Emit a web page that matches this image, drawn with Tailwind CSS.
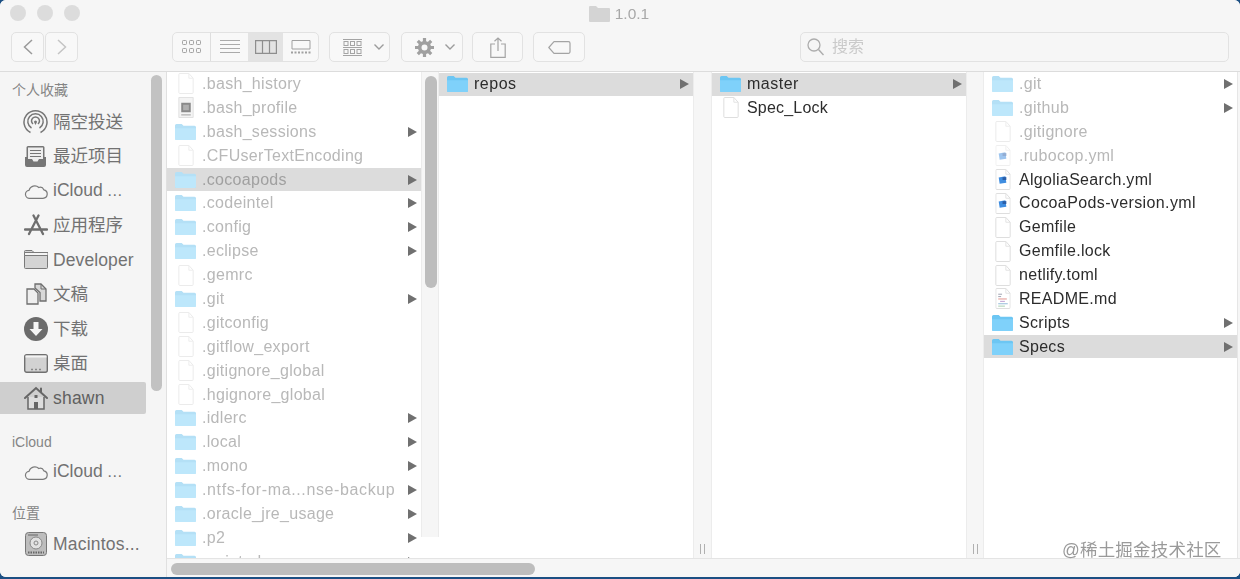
<!DOCTYPE html>
<html><head><meta charset="utf-8"><title>1.0.1</title>
<script src="https://cdn.jsdelivr.net/npm/@tailwindcss/browser@4"></script></head>
<body>
<svg class="hidden" width="0" height="0">
<symbol id="folder" viewBox="0 0 21 16"><path fill="#6cc6f3" d="M1.5 0h5.2l1.8 1.8h11a1.5 1.5 0 0 1 1.5 1.5v11.2a1.5 1.5 0 0 1-1.5 1.5h-18A1.5 1.5 0 0 1 0 14.500V1.500A1.500 1.500 0 0 1 1.500 0z"/><path fill="#7fd1fa" d="M0 4.200h21v10.300a1.500 1.500 0 0 1-1.500 1.500h-18A1.500 1.500 0 0 1 0 14.500z"/></symbol>
<symbol id="folderlight" viewBox="0 0 21 16"><path fill="#b4e0f6" d="M1.5 0h5.2l1.800 1.800h11a1.500 1.500 0 0 1 1.500 1.500v11.200a1.500 1.500 0 0 1-1.500 1.500h-18A1.500 1.500 0 0 1 0 14.500V1.500A1.500 1.500 0 0 1 1.500 0z"/><path fill="#bde7fb" d="M0 4.200h21v10.300a1.500 1.500 0 0 1-1.500 1.500h-18A1.500 1.500 0 0 1 0 14.500z"/></symbol>
<symbol id="doc" viewBox="0 0 16 22"><path fill="#fff" stroke="#dcdcdc" d="M1.500.500h9.500l4.500 5v15a1 1 0 0 1-1 1h-13a1 1 0 0 1-1-1v-19a1 1 0 0 1 1-1z"/><path fill="none" stroke="#e2e2e2" d="M11 .5v5h4.500"/></symbol>
<symbol id="yml" viewBox="0 0 16 22"><use href="#doc"/><path fill="#3f8de0" d="M3.500 9l7-1.500 1 7-7 1z"/><path fill="#2a5ea8" d="M7.500 8.500h4v3h-4z"/></symbol>
<symbol id="readme" viewBox="0 0 16 22"><use href="#doc"/><path fill="none" stroke-width="1" stroke="#9ca0ae" d="M3 6.500h4M3 9h3"/><path fill="none" stroke="#e08f88" d="M3 11.500h9"/><path fill="none" stroke="#bb9bd0" d="M5 14h5"/><path fill="none" stroke="#8fb8d6" d="M3 16.500h10"/><path fill="none" stroke="#a4cfae" d="M3 19h7"/></symbol>
<symbol id="exec" viewBox="0 0 16 22"><path fill="#f4f4f4" stroke="#e0e0e0" d="M.500.500h15v21H.500z"/><path fill="#8a8a8a" d="M3 6h10v10H3z"/><path fill="#b0b0b0" d="M5 8h6v6H5z"/><path fill="#b0b0b0" d="M3 18h10v1.500H3z"/></symbol>
<symbol id="arrow" viewBox="0 0 9 10"><path fill="#707070" d="M0 0l9 5-9 5z"/></symbol>
<symbol id="cloud" viewBox="0 0 24 16"><path fill="none" stroke="#7a7a7a" stroke-width="1.200" d="M6 15.300h13a4.300 4.300 0 0 0 .8-8.500 4 4 0 0 0-5-2.300A6 6 0 0 0 5 7.300a4 4 0 0 0 1 8z"/></symbol>
</svg>
<div class="w-[1240px] h-[579px] overflow-hidden bg-[#1c4f83] relative font-['Liberation_Sans','Noto_Sans_CJK_SC',sans-serif]">
<div class="h-[577px] rounded-[6px] overflow-hidden flex flex-col bg-[#f5f5f5] blur-[0.35px]">

<header class="h-[72px] shrink-0 border-b border-[#dcdcdc] flex flex-col bg-[#f6f6f6]">
  <div class="h-[27px] shrink-0 relative flex items-center justify-center pr-[2px]">
    <div class="absolute left-[10px] top-[5px] flex gap-[11px]">
      <span class="block size-4 rounded-full bg-[#dcdcdc]"></span><span class="block size-4 rounded-full bg-[#dcdcdc]"></span><span class="block size-4 rounded-full bg-[#dcdcdc]"></span>
    </div>
    <div class="flex items-center gap-[5px] text-[15.5px] text-[#a8a8a8]">
      <svg width="21" height="16" viewBox="0 0 21 16"><path fill="#d4d4d4" d="M1 0h6l2 2h11a1 1 0 0 1 1 1v12a1 1 0 0 1-1 1H1a1 1 0 0 1-1-1V1a1 1 0 0 1 1-1z"/></svg>
      <span>1.0.1</span>
    </div>
  </div>
  <div class="h-[30px] flex items-stretch pl-[11px] mt-[5px]">
    <div class="flex gap-px">
      <div class="w-[33px] border border-[#e2e2e2] rounded-[5px] bg-[#f8f8f8] flex items-center justify-center"><svg width="12" height="18" viewBox="0 0 12 18"><path fill="none" stroke="#9a9a9a" stroke-width="1.500" d="M10 2L2.500 9l7.500 7"/></svg></div>
      <div class="w-[33px] border border-[#e2e2e2] rounded-[5px] bg-[#f8f8f8] flex items-center justify-center"><svg width="12" height="18" viewBox="0 0 12 18"><path fill="none" stroke="#c4c4c4" stroke-width="1.500" d="M2 2l7.500 7-7.500 7"/></svg></div>
    </div>
    <div class="ml-[94px] w-[147px] border border-[#e2e2e2] rounded-[5px] bg-[#f8f8f8] flex overflow-hidden">
      <div class="w-[38px] border-r border-[#dedede] flex items-center justify-center"><svg width="19" height="14" viewBox="0 0 19 14"><g fill="none" stroke="#a2a2a2"><rect x=".5" y=".5" width="4" height="4" rx=".8"/><rect x="7.500" y=".5" width="4" height="4" rx=".8"/><rect x="14.500" y=".5" width="4" height="4" rx=".8"/><rect x=".5" y="8.500" width="4" height="4" rx=".8"/><rect x="7.500" y="8.500" width="4" height="4" rx=".8"/><rect x="14.500" y="8.500" width="4" height="4" rx=".8"/></g></svg></div>
      <div class="w-[37px] flex items-center justify-center"><svg width="20" height="14" viewBox="0 0 20 14"><path stroke="#aaa" d="M0 .5h20M0 4.500h20M0 8.500h20M0 12.500h20"/></svg></div>
      <div class="w-[35px] bg-[#e3e3e3] flex items-center justify-center"><svg width="22" height="14" viewBox="0 0 22 14"><path fill="none" stroke="#8e8e8e" stroke-width="1.200" d="M.6.6h20.800v12.800H.6zM7.500.6v12.800M14.500.6v12.800"/></svg></div>
      <div class="flex-1 flex items-center justify-center"><svg width="20" height="14" viewBox="0 0 20 14"><path fill="none" stroke="#a0a0a0" d="M1 .5h18v8.500H1z"/><path stroke="#a0a0a0" stroke-width="2" stroke-dasharray="2 1.500" d="M0 12.500h20"/></svg></div>
    </div>
    <div class="ml-[10px] w-[61px] border border-[#e2e2e2] rounded-[5px] bg-[#f8f8f8] flex items-center pl-[13px] gap-[12px]">
      <svg width="19" height="17" viewBox="0 0 19 17"><g fill="none" stroke="#a4a4a4"><path d="M0 .5h19M0 8.500h19M0 16.500h19"/><rect x="1" y="2.500" width="4" height="4"/><rect x="7.500" y="2.500" width="4" height="4"/><rect x="14" y="2.500" width="4" height="4"/><rect x="1" y="10.500" width="4" height="4"/><rect x="7.500" y="10.500" width="4" height="4"/><rect x="14" y="10.500" width="4" height="4"/></g></svg>
      <svg width="10" height="6" viewBox="0 0 10 6"><path fill="none" stroke="#9c9c9c" stroke-width="1.400" d="M.5.500L5 5 9.500.5"/></svg>
    </div>
    <div class="ml-[11px] w-[62px] border border-[#e2e2e2] rounded-[5px] bg-[#f8f8f8] flex items-center pl-[13px] gap-[11px]">
      <svg width="19" height="19" viewBox="0 0 19 19"><circle cx="9.500" cy="9.500" r="4.800" fill="none" stroke="#a0a0a0" stroke-width="3.600"/><path stroke="#a0a0a0" stroke-width="3.200" d="M9.500 0v4M9.500 15v4M0 9.500h4M15 9.500h4M2.800 2.800l2.800 2.800M13.400 13.400l2.800 2.800M2.800 16.200l2.800-2.800M13.400 5.600l2.800-2.800"/></svg>
      <svg width="10" height="6" viewBox="0 0 10 6"><path fill="none" stroke="#9c9c9c" stroke-width="1.400" d="M.5.500L5 5 9.500.5"/></svg>
    </div>
    <div class="ml-[9px] w-[51px] border border-[#e2e2e2] rounded-[5px] bg-[#f8f8f8] flex items-center justify-center"><svg width="16" height="21" viewBox="0 0 16 21"><path fill="none" stroke="#a4a4a4" stroke-width="1.200" d="M5 7H.8v13.400h14.400V7H11M8 14V1M4.500 4.300L8 1l3.500 3.300"/></svg></div>
    <div class="ml-[10px] w-[52px] border border-[#e2e2e2] rounded-[5px] bg-[#f8f8f8] flex items-center justify-center"><svg width="23" height="13" viewBox="0 0 23 13"><path fill="none" stroke="#a4a4a4" stroke-width="1.200" stroke-linejoin="round" d="M6 .7h14.500a1.500 1.500 0 0 1 1.500 1.500v8.600a1.500 1.500 0 0 1-1.500 1.500H6L.8 6.500z"/></svg></div>
    <div class="ml-[215px] w-[429px] border border-[#e2e2e2] rounded-[5px] bg-[#f6f6f6] flex items-center pl-[6px] gap-[8px] text-[16px] text-[#cacaca]">
      <svg width="17" height="18" viewBox="0 0 17 18"><circle cx="7" cy="7" r="6" fill="none" stroke="#adadad" stroke-width="1.300"/><path stroke="#adadad" stroke-width="1.500" d="M11.500 11.500l5 5.500"/></svg>
      <span>搜索</span>
    </div>
  </div>
</header>

<div class="flex-1 min-h-0 flex">
  <aside class="w-[167px] shrink-0 relative border-r border-[#e0e0e0] bg-[#f5f5f5] text-[#727272] text-[17.5px] leading-[34.5px]">
    <div class="absolute left-[151px] top-[3px] w-[11px] h-[316px] rounded-full bg-[#c2c2c2]"></div>
    <div class="text-[14px] text-[#858585] leading-[20px] pl-[12px] pt-[8px] mb-[4.5px]">个人收藏</div>
    <div class="h-[34.5px] flex items-center pl-[23px] gap-[5px]"><svg class="shrink-0" width="25" height="25" viewBox="0 0 25 25"><g fill="none" stroke="#767676" stroke-width="1.500"><path d="M7.500 23.500A11.500 11.500 0 1 1 17.500 23.500"/><path d="M8.500 19A7.700 7.700 0 1 1 16.500 19"/><path d="M10 15A4 4 0 1 1 15 15"/></g><path fill="#767676" d="M12.500 11.500a1.500 1.500 0 0 1 1.500 1.500l-1.500 3-1.500-3a1.500 1.500 0 0 1 1.500-1.500z"/></svg><span>隔空投送</span></div>
    <div class="h-[34.5px] flex items-center pl-[25px] gap-[7px]"><svg class="shrink-0" width="21" height="21" viewBox="0 0 21 21"><path fill="#767676" d="M3 0h15a1.500 1.500 0 0 1 1.500 1.500V11H21v8a2 2 0 0 1-2 2H2a2 2 0 0 1-2-2v-8h1.500V1.500A1.500 1.500 0 0 1 3 0z"/><path fill="#eee" d="M3 1.500h15V13h-4l-1.500 2.500h-4L7 13H3z"/><path stroke="#767676" stroke-width="1.200" d="M5 4.500h11M5 7.500h11M5 10.500h11"/></svg><span>最近项目</span></div>
    <div class="h-[34.5px] flex items-center pl-[24px] gap-[5px]"><svg class="shrink-0" width="24" height="16" viewBox="0 0 24 16"><use href="#cloud"/></svg><span>iCloud<span class="ml-[4px] text-[16px]">…</span></span></div>
    <div class="h-[34.5px] flex items-center pl-[24px] gap-[5px]"><svg class="shrink-0" width="24" height="22" viewBox="0 0 24 22"><g fill="none" stroke="#6e6e6e" stroke-width="2.300" stroke-linecap="round"><path d="M9.500 1.500L19 20M14.500 1.500L5 20M1 15.500h22"/></g></svg><span>应用程序</span></div>
    <div class="h-[34.5px] flex items-center pl-[24px] gap-[5px]"><svg class="shrink-0" width="24" height="19" viewBox="0 0 24 19"><path fill="#d4d4d4" stroke="#7a7a7a" d="M1.500.5h6.500l2 2h12.500a1 1 0 0 1 1 1v14a1 1 0 0 1-1 1h-21a1 1 0 0 1-1-1v-16a1 1 0 0 1 1-1z"/><path fill="#f4f4f4" stroke="#7a7a7a" d="M.5 2.500h23.500v3H.5z"/></svg><span class="tracking-[0.1px]">Developer</span></div>
    <div class="h-[34.5px] flex items-center pl-[26px] gap-[6px]"><svg class="shrink-0" width="21" height="22" viewBox="0 0 21 22"><path fill="#eee" stroke="#6e6e6e" stroke-width="1.300" d="M1 6h7l4 4v11H1z"/><path fill="#d8d8d8" stroke="#6e6e6e" stroke-width="1.300" d="M9 1h6l5 5v12h-6V9.500L9 5z"/><path fill="none" stroke="#6e6e6e" d="M15 1v5h5"/></svg><span>文稿</span></div>
    <div class="h-[34.5px] flex items-center pl-[24px] gap-[5px]"><svg class="shrink-0" width="24" height="24" viewBox="0 0 24 24"><circle cx="12" cy="12" r="12" fill="#6b6b6b"/><path fill="#f5f5f5" d="M9.500 5h5v7h4L12 19l-6.500-7h4z"/></svg><span>下载</span></div>
    <div class="h-[34.5px] flex items-center pl-[24px] gap-[5px]"><svg class="shrink-0" width="24" height="19" viewBox="0 0 24 19"><rect x=".7" y=".7" width="22.600" height="17.600" rx="2" fill="#d2d2d2" stroke="#707070" stroke-width="1.400"/><path fill="#f4f4f4" d="M1.500 1.500h21v2h-21z"/><path stroke="#888" stroke-width="1.600" stroke-dasharray="2 2" d="M7 15.500h10"/></svg><span>桌面</span></div>
    <div class="h-[32px] my-[1.250px] mr-[20px] rounded-r-[2px] bg-[#cfcfcf] flex items-center pl-[24px] gap-[5px]"><svg class="shrink-0" width="24" height="24" viewBox="0 0 24 24"><path fill="#ddd" stroke="#666" stroke-width="1.500" d="M4 11v12h16V11"/><path fill="none" stroke="#666" stroke-width="2" stroke-linecap="round" d="M1 12L12 2l11 10M17 2.500v3.500"/><path fill="#666" d="M10 16h4v7h-4zM10.500 9h3v3h-3z"/></svg><span class="text-[#606060] tracking-[0.2px]">shawn</span></div>
    <div class="text-[14px] text-[#858585] leading-[20px] pl-[12px] mt-[18px] mb-[2.500px]">iCloud</div>
    <div class="h-[34.5px] flex items-center pl-[24px] gap-[5px]"><svg class="shrink-0" width="24" height="16" viewBox="0 0 24 16"><use href="#cloud"/></svg><span>iCloud<span class="ml-[4px] text-[16px]">…</span></span></div>
    <div class="text-[14px] text-[#858585] leading-[20px] pl-[12px] mt-[14px] mb-[4px]">位置</div>
    <div class="h-[34.5px] flex items-center pl-[25px] gap-[6px]"><svg class="shrink-0" width="22" height="24" viewBox="0 0 22 24"><rect x=".5" y=".5" width="21" height="23" rx="3" fill="#bdbdbd" stroke="#777"/><circle cx="11" cy="11" r="6" fill="#e2e2e2" stroke="#888"/><circle cx="11" cy="11" r="2" fill="none" stroke="#888"/><path stroke="#666" stroke-width="2" stroke-dasharray="1.500 1" d="M3 20.500h16"/><path stroke="#666" d="M3 3h10"/></svg><span class="tracking-[0.2px]">Macintos...</span></div>
  </aside>

  <main class="flex-1 min-w-0 flex flex-col bg-white">
    <div class="flex-1 min-h-0 flex text-[16px] text-[#2c2c2c] tracking-[0.3px]">

      <section class="w-[254px] shrink-0 overflow-hidden text-[#b8b8b8]">
        <div class="h-[23.9px] flex items-center pl-[11px] gap-[6px]"><svg class="shrink-0 opacity-60" width="16" height="21"><use href="#doc"/></svg><span class="ml-[2px]">.bash_history</span></div>
        <div class="h-[23.9px] flex items-center pl-[11px] gap-[6px]"><svg class="shrink-0" width="16" height="21"><use href="#exec"/></svg><span class="ml-[2px]">.bash_profile</span></div>
        <div class="h-[23.9px] flex items-center pl-[8px] gap-[6px]"><svg class="shrink-0" width="21" height="16"><use href="#folderlight"/></svg><span class="flex-1">.bash_sessions</span><svg class="mr-[4px]" width="9" height="10"><use href="#arrow"/></svg></div>
        <div class="h-[23.9px] flex items-center pl-[11px] gap-[6px]"><svg class="shrink-0 opacity-60" width="16" height="21"><use href="#doc"/></svg><span class="ml-[2px]">.CFUserTextEncoding</span></div>
        <div class="h-[23px] mt-[0.5px] mb-[0.4px] flex items-center pl-[8px] gap-[6px] bg-[#dcdcdc]"><svg class="shrink-0" width="21" height="16"><use href="#folderlight"/></svg><span class="flex-1 text-[#a0a0a0]">.cocoapods</span><svg class="mr-[4px]" width="9" height="10"><use href="#arrow"/></svg></div>
        <div class="h-[23.9px] flex items-center pl-[8px] gap-[6px]"><svg class="shrink-0" width="21" height="16"><use href="#folderlight"/></svg><span class="flex-1">.codeintel</span><svg class="mr-[4px]" width="9" height="10"><use href="#arrow"/></svg></div>
        <div class="h-[23.9px] flex items-center pl-[8px] gap-[6px]"><svg class="shrink-0" width="21" height="16"><use href="#folderlight"/></svg><span class="flex-1">.config</span><svg class="mr-[4px]" width="9" height="10"><use href="#arrow"/></svg></div>
        <div class="h-[23.9px] flex items-center pl-[8px] gap-[6px]"><svg class="shrink-0" width="21" height="16"><use href="#folderlight"/></svg><span class="flex-1">.eclipse</span><svg class="mr-[4px]" width="9" height="10"><use href="#arrow"/></svg></div>
        <div class="h-[23.9px] flex items-center pl-[11px] gap-[6px]"><svg class="shrink-0 opacity-60" width="16" height="21"><use href="#doc"/></svg><span class="ml-[2px]">.gemrc</span></div>
        <div class="h-[23.9px] flex items-center pl-[8px] gap-[6px]"><svg class="shrink-0" width="21" height="16"><use href="#folderlight"/></svg><span class="flex-1">.git</span><svg class="mr-[4px]" width="9" height="10"><use href="#arrow"/></svg></div>
        <div class="h-[23.9px] flex items-center pl-[11px] gap-[6px]"><svg class="shrink-0 opacity-60" width="16" height="21"><use href="#doc"/></svg><span class="ml-[2px]">.gitconfig</span></div>
        <div class="h-[23.9px] flex items-center pl-[11px] gap-[6px]"><svg class="shrink-0 opacity-60" width="16" height="21"><use href="#doc"/></svg><span class="ml-[2px]">.gitflow_export</span></div>
        <div class="h-[23.9px] flex items-center pl-[11px] gap-[6px]"><svg class="shrink-0 opacity-60" width="16" height="21"><use href="#doc"/></svg><span class="ml-[2px]">.gitignore_global</span></div>
        <div class="h-[23.9px] flex items-center pl-[11px] gap-[6px]"><svg class="shrink-0 opacity-60" width="16" height="21"><use href="#doc"/></svg><span class="ml-[2px]">.hgignore_global</span></div>
        <div class="h-[23.9px] flex items-center pl-[8px] gap-[6px]"><svg class="shrink-0" width="21" height="16"><use href="#folderlight"/></svg><span class="flex-1">.idlerc</span><svg class="mr-[4px]" width="9" height="10"><use href="#arrow"/></svg></div>
        <div class="h-[23.9px] flex items-center pl-[8px] gap-[6px]"><svg class="shrink-0" width="21" height="16"><use href="#folderlight"/></svg><span class="flex-1">.local</span><svg class="mr-[4px]" width="9" height="10"><use href="#arrow"/></svg></div>
        <div class="h-[23.9px] flex items-center pl-[8px] gap-[6px]"><svg class="shrink-0" width="21" height="16"><use href="#folderlight"/></svg><span class="flex-1">.mono</span><svg class="mr-[4px]" width="9" height="10"><use href="#arrow"/></svg></div>
        <div class="h-[23.9px] flex items-center pl-[8px] gap-[6px]"><svg class="shrink-0" width="21" height="16"><use href="#folderlight"/></svg><span class="flex-1 tracking-[0.62px]">.ntfs-for-ma...nse-backup</span><svg class="mr-[4px]" width="9" height="10"><use href="#arrow"/></svg></div>
        <div class="h-[23.9px] flex items-center pl-[8px] gap-[6px]"><svg class="shrink-0" width="21" height="16"><use href="#folderlight"/></svg><span class="flex-1">.oracle_jre_usage</span><svg class="mr-[4px]" width="9" height="10"><use href="#arrow"/></svg></div>
        <div class="h-[23.9px] flex items-center pl-[8px] gap-[6px]"><svg class="shrink-0" width="21" height="16"><use href="#folderlight"/></svg><span class="flex-1">.p2</span><svg class="mr-[4px]" width="9" height="10"><use href="#arrow"/></svg></div>
        <div class="h-[23.9px] flex items-center pl-[8px] gap-[6px]"><svg class="shrink-0" width="21" height="16"><use href="#folderlight"/></svg><span class="flex-1">.pointed</span><svg class="mr-[4px]" width="9" height="10"><use href="#arrow"/></svg></div>
      </section>

      <div class="w-[18px] shrink-0 h-[465px] bg-[#f6f6f6] border-x border-[#ececec] pt-[4px] pl-[3px]">
        <div class="w-[12px] h-[212px] rounded-full bg-[#bdbdbd]"></div>
      </div>

      <section class="w-[254px] shrink-0">
        <div class="h-[23px] mt-[0.5px] flex items-center pl-[8px] gap-[6px] bg-[#dcdcdc]"><svg class="shrink-0" width="21" height="16"><use href="#folder"/></svg><span class="flex-1 tracking-[0.5px]">repos</span><svg class="mr-[4px]" width="9" height="10"><use href="#arrow"/></svg></div>
      </section>

      <div class="w-[19px] shrink-0 bg-[#f6f6f6] border-x border-[#ececec] flex justify-center items-end pb-[4px]">
        <svg width="7" height="10"><path stroke="#b0b0b0" d="M1.500 0v10M5.500 0v10"/></svg>
      </div>

      <section class="w-[254px] shrink-0">
        <div class="h-[23px] mt-[0.5px] mb-[0.4px] flex items-center pl-[8px] gap-[6px] bg-[#dcdcdc]"><svg class="shrink-0" width="21" height="16"><use href="#folder"/></svg><span class="flex-1 tracking-[0.5px]">master</span><svg class="mr-[4px]" width="9" height="10"><use href="#arrow"/></svg></div>
        <div class="h-[23.9px] flex items-center pl-[11px] gap-[6px]"><svg class="shrink-0" width="16" height="21"><use href="#doc"/></svg><span class="ml-[2px] tracking-[0.2px]">Spec_Lock</span></div>
      </section>

      <div class="w-[18px] shrink-0 bg-[#f6f6f6] border-x border-[#ececec] flex justify-center items-end pb-[4px]">
        <svg width="7" height="10"><path stroke="#b0b0b0" d="M1.500 0v10M5.500 0v10"/></svg>
      </div>

      <section class="flex-1 min-w-0">
        <div class="h-[23.9px] flex items-center pl-[8px] gap-[6px] text-[#b8b8b8]"><svg class="shrink-0" width="21" height="16"><use href="#folderlight"/></svg><span class="flex-1">.git</span><svg class="mr-[4px]" width="9" height="10"><use href="#arrow"/></svg></div>
        <div class="h-[23.9px] flex items-center pl-[8px] gap-[6px] text-[#b8b8b8]"><svg class="shrink-0" width="21" height="16"><use href="#folderlight"/></svg><span class="flex-1">.github</span><svg class="mr-[4px]" width="9" height="10"><use href="#arrow"/></svg></div>
        <div class="h-[23.9px] flex items-center pl-[11px] gap-[6px] text-[#b8b8b8]"><svg class="shrink-0 opacity-60" width="16" height="21"><use href="#doc"/></svg><span class="ml-[2px]">.gitignore</span></div>
        <div class="h-[23.9px] flex items-center pl-[11px] gap-[6px] text-[#b8b8b8]"><svg class="shrink-0 opacity-50" width="16" height="21"><use href="#yml"/></svg><span class="ml-[2px]">.rubocop.yml</span></div>
        <div class="h-[23.9px] flex items-center pl-[11px] gap-[6px]"><svg class="shrink-0" width="16" height="21"><use href="#yml"/></svg><span class="ml-[2px]">AlgoliaSearch.yml</span></div>
        <div class="h-[23.9px] flex items-center pl-[11px] gap-[6px]"><svg class="shrink-0" width="16" height="21"><use href="#yml"/></svg><span class="ml-[2px] tracking-[0.38px]">CocoaPods-version.yml</span></div>
        <div class="h-[23.9px] flex items-center pl-[11px] gap-[6px]"><svg class="shrink-0" width="16" height="21"><use href="#doc"/></svg><span class="ml-[2px]">Gemfile</span></div>
        <div class="h-[23.9px] flex items-center pl-[11px] gap-[6px]"><svg class="shrink-0" width="16" height="21"><use href="#doc"/></svg><span class="ml-[2px]">Gemfile.lock</span></div>
        <div class="h-[23.9px] flex items-center pl-[11px] gap-[6px]"><svg class="shrink-0" width="16" height="21"><use href="#doc"/></svg><span class="ml-[2px]">netlify.toml</span></div>
        <div class="h-[23.9px] flex items-center pl-[11px] gap-[6px]"><svg class="shrink-0" width="16" height="21"><use href="#readme"/></svg><span class="ml-[2px]">README.md</span></div>
        <div class="h-[23.9px] flex items-center pl-[8px] gap-[6px]"><svg class="shrink-0" width="21" height="16"><use href="#folder"/></svg><span class="flex-1">Scripts</span><svg class="mr-[4px]" width="9" height="10"><use href="#arrow"/></svg></div>
        <div class="h-[23px] mt-[0.5px] flex items-center pl-[8px] gap-[6px] bg-[#dcdcdc]"><svg class="shrink-0" width="21" height="16"><use href="#folder"/></svg><span class="flex-1">Specs</span><svg class="mr-[4px]" width="9" height="10"><use href="#arrow"/></svg></div>
      </section>
      <div class="w-[3px] shrink-0 bg-[#f6f6f6] border-l border-[#e6e6e6]"></div>
    </div>
    <div class="h-[19px] shrink-0 border-t border-[#e4e4e4] bg-[#f6f6f6] pt-[4px] pl-[4px]">
      <div class="w-[364px] h-[12px] rounded-full bg-[#bdbdbd]"></div>
    </div>
  </main>
</div>
</div>
<div class="absolute left-[1062px] top-[538px] text-[17.5px] tracking-[0.2px] leading-[24px] text-[#9a9a9a]">@稀土掘金技术社区</div>
</div>
</body></html>
